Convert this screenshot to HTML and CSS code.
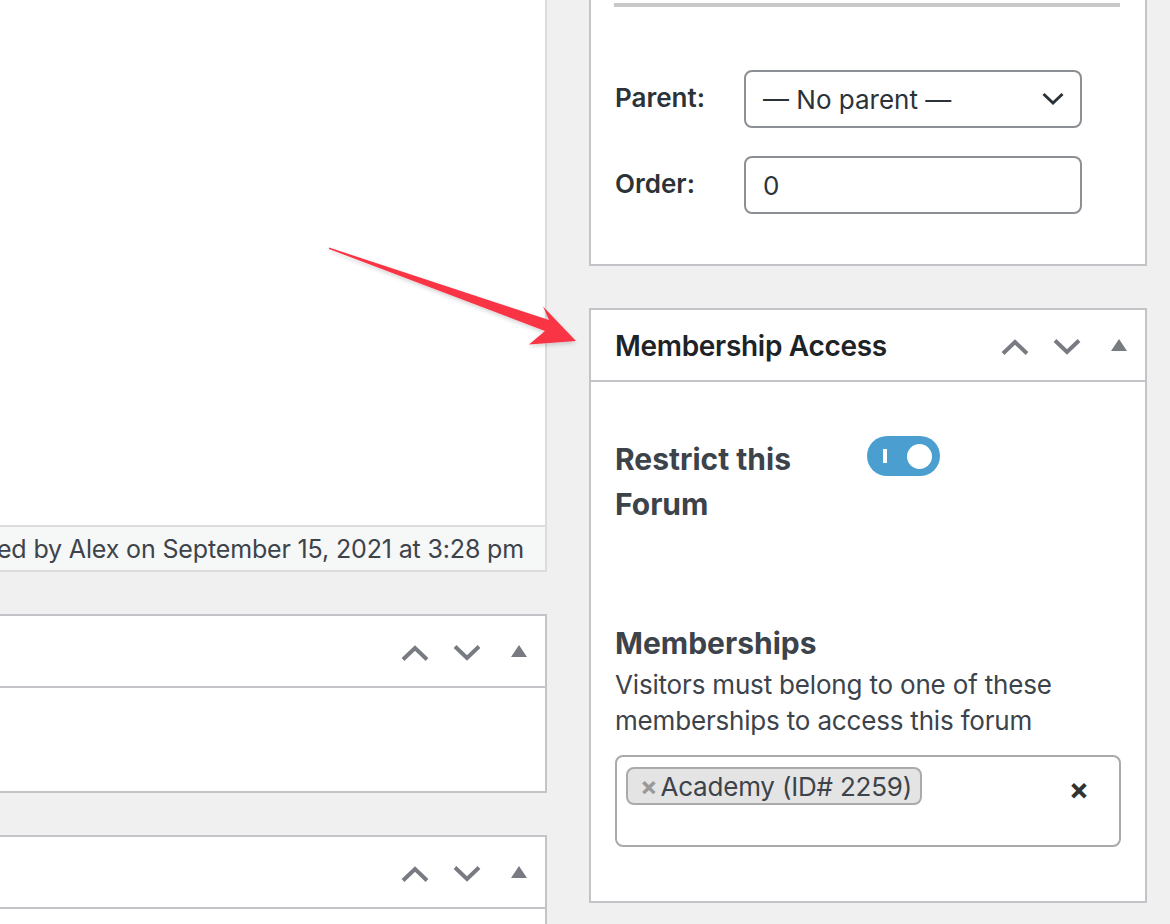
FILE: index.html
```html
<!DOCTYPE html>
<html lang="en">
<head>
<meta charset="utf-8">
<title>Edit Forum</title>
<link rel="stylesheet" href="styles.css">
</head>
<body>
<div class="page">
  <div class="main">
    <div class="editor"></div>
    <div class="status"><span class="status-text">Last edited by Alex on September 15, 2021 at 3:28 pm</span></div>

    <div class="postbox">
      <div class="postbox-header">
        <div class="handles">
          <button class="handle"><svg width="28" height="16" viewBox="0 0 28 16"><polyline points="2,14.5 14,3 26,14.5" fill="none" stroke="#787c82" stroke-width="4"/></svg></button>
          <button class="handle"><svg width="28" height="16" viewBox="0 0 28 16"><polyline points="2,1.5 14,13 26,1.5" fill="none" stroke="#787c82" stroke-width="4"/></svg></button>
          <button class="handle tri"><svg width="16" height="12" viewBox="0 0 16 12"><polygon points="8,0 16,12 0,12" fill="#787c82"/></svg></button>
        </div>
      </div>
      <div class="inside short"></div>
    </div>

    <div class="postbox">
      <div class="postbox-header">
        <div class="handles">
          <button class="handle"><svg width="28" height="16" viewBox="0 0 28 16"><polyline points="2,14.5 14,3 26,14.5" fill="none" stroke="#787c82" stroke-width="4"/></svg></button>
          <button class="handle"><svg width="28" height="16" viewBox="0 0 28 16"><polyline points="2,1.5 14,13 26,1.5" fill="none" stroke="#787c82" stroke-width="4"/></svg></button>
          <button class="handle tri"><svg width="16" height="12" viewBox="0 0 16 12"><polygon points="8,0 16,12 0,12" fill="#787c82"/></svg></button>
        </div>
      </div>
      <div class="inside tall"></div>
    </div>
  </div>

  <div class="side">
    <div class="postbox attrs">
      <div class="rule"></div>
      <div class="attr-grid">
        <span class="attr-label">Parent:</span>
        <div class="select">
          <span>— No parent —</span>
          <svg width="22" height="14" viewBox="0 0 22 14"><polyline points="1.5,2 11,11 20.5,2" fill="none" stroke="#2c3338" stroke-width="3"/></svg>
        </div>
        <span class="attr-label">Order:</span>
        <div class="input">0</div>
      </div>
    </div>

    <div class="postbox">
      <div class="postbox-header">
        <h2 class="hndle">Membership Access</h2>
        <div class="handles">
          <button class="handle"><svg width="28" height="16" viewBox="0 0 28 16"><polyline points="2,14.5 14,3 26,14.5" fill="none" stroke="#787c82" stroke-width="4"/></svg></button>
          <button class="handle"><svg width="28" height="16" viewBox="0 0 28 16"><polyline points="2,1.5 14,13 26,1.5" fill="none" stroke="#787c82" stroke-width="4"/></svg></button>
          <button class="handle tri"><svg width="16" height="12" viewBox="0 0 16 12"><polygon points="8,0 16,12 0,12" fill="#787c82"/></svg></button>
        </div>
      </div>
      <div class="inside access">
        <div class="restrict-row">
          <span class="restrict-label">Restrict this Forum</span>
          <span class="toggle"><span class="toggle-bar"></span><span class="toggle-knob"></span></span>
        </div>
        <h3 class="mem-title">Memberships</h3>
        <p class="mem-desc">Visitors must belong to one of these memberships to access this forum</p>
        <div class="select2">
          <span class="tag"><span class="tag-x">×</span>Academy (ID# 2259)</span>
          <span class="clear">×</span>
        </div>
      </div>
    </div>
  </div>
</div>

<svg class="arrow" width="1170" height="924" viewBox="0 0 1170 924">
  <defs>
    <filter id="sh" x="-10%" y="-20%" width="120%" height="150%">
      <feDropShadow dx="0" dy="2" stdDeviation="2" flood-color="#000" flood-opacity="0.18"/>
    </filter>
  </defs>
  <polygon filter="url(#sh)" fill="#f93445" points="329,247.5 549,320 543,306.5 576,341 529,344.5 545,331 329,249"/>
</svg>
</body>
</html>
```

FILE: styles.css
```css
* { box-sizing: border-box; }

html, body {
  margin: 0;
  padding: 0;
  background: #f0f0f1;
  font-family: Inter, "Noto Sans", "Liberation Sans", sans-serif;
  color: #3c434a;
  overflow: hidden;
  height: 924px;
}

.page {
  display: flex;
  align-items: flex-start;
  width: 1170px;
}

.main {
  width: 567px;
  margin-left: -20px;
  margin-right: 42px;
  flex: none;
}

.side {
  width: 558px;
  flex: none;
  margin-top: -2px;
}

.editor {
  height: 525px;
  background: #fff;
  border-right: 2px solid #dcdcde;
}

.status {
  height: 47px;
  background: #f6f7f7;
  border: 2px solid #dcdcde;
  display: flex;
  justify-content: flex-end;
  align-items: center;
  padding-right: 21px;
  white-space: nowrap;
  overflow: hidden;
  font-size: 25px;
  letter-spacing: -0.15px;
  color: #3c434a;
}

.postbox {
  background: #fff;
  border: 2px solid #c3c4c7;
  margin-top: 42px;
}

.side .postbox.attrs { margin-top: 0; }

.postbox-header {
  height: 72px;
  border-bottom: 2px solid #c3c4c7;
  display: flex;
  align-items: center;
  justify-content: flex-end;
  padding-left: 24px;
}

.hndle {
  margin: 0 auto 0 0;
  font-size: 28px;
  font-weight: 600;
  letter-spacing: -0.3px;
  color: #1d2327;
  padding-top: 2px;
}

.handles {
  display: flex;
  height: 100%;
}

.handle {
  width: 52px;
  height: 100%;
  border: 0;
  background: none;
  padding: 0;
  display: flex;
  align-items: center;
  justify-content: center;
  padding-top: 4px;
}

.handle.tri { padding-top: 0; }

.inside.short { height: 103px; }
.inside.tall { height: 200px; }

/* Page attributes box */
.attrs {
  padding: 3px 25px 50px 24px;
}

.rule {
  height: 4px;
  background: #c9c9c9;
  margin-left: -1px;
}

.attr-grid {
  display: grid;
  grid-template-columns: 129px 338px;
  row-gap: 28px;
  align-items: center;
  margin-top: 63px;
}

.attr-label {
  font-size: 26px;
  font-weight: 600;
  color: #2c3338;
  margin-top: -3px;
}

.select, .input {
  height: 58px;
  border: 2px solid #8c8f94;
  border-radius: 8px;
  font-size: 26px;
  color: #2c3338;
  display: flex;
  align-items: center;
  padding: 0 16px 0 17px;
}

.select { justify-content: space-between; }

/* Membership access */
.access {
  padding: 55px 24px 54px 24px;
}

.restrict-row {
  display: flex;
  align-items: flex-start;
}

.restrict-label {
  width: 252px;
  padding-right: 40px;
  font-size: 30px;
  font-weight: 700;
  line-height: 45px;
  color: #3c434a;
}

.toggle {
  position: relative;
  width: 73px;
  height: 40px;
  border-radius: 20px;
  background: #4a9fd0;
  display: flex;
  align-items: center;
  margin-top: -1px;
}

.toggle-bar {
  width: 4px;
  height: 14px;
  background: #fff;
  margin-left: 16px;
}

.toggle-knob {
  width: 25px;
  height: 25px;
  border-radius: 50%;
  background: #fff;
  margin-left: auto;
  margin-right: 8px;
}

.mem-title {
  margin: 98px 0 0 0;
  font-size: 30px;
  font-weight: 700;
  line-height: 36px;
  color: #3c434a;
}

.mem-desc {
  margin: 6px 0 0 0;
  font-size: 26px;
  letter-spacing: -0.18px;
  line-height: 36px;
  color: #3c434a;
}

.select2 {
  margin-top: 16px;
  height: 92px;
  border: 2px solid #aaa;
  border-radius: 8px;
  padding: 10px 0 0 9px;
  display: flex;
  align-items: flex-start;
}

.tag {
  height: 38px;
  background: #e4e4e4;
  border: 2px solid #aaa;
  border-radius: 8px;
  display: flex;
  align-items: center;
  padding: 0 8px 0 12px;
  font-size: 26px;
  letter-spacing: -0.2px;
  color: #3c434a;
}

.tag-x {
  color: #999;
  font-weight: 700;
  margin-right: 3px;
}

.clear {
  margin-left: auto;
  margin-right: 30px;
  margin-top: 3px;
  font-size: 30px;
  font-weight: 700;
  color: #333;
  line-height: 38px;
}

.arrow {
  position: absolute;
  left: 0;
  top: 0;
  pointer-events: none;
}
```
